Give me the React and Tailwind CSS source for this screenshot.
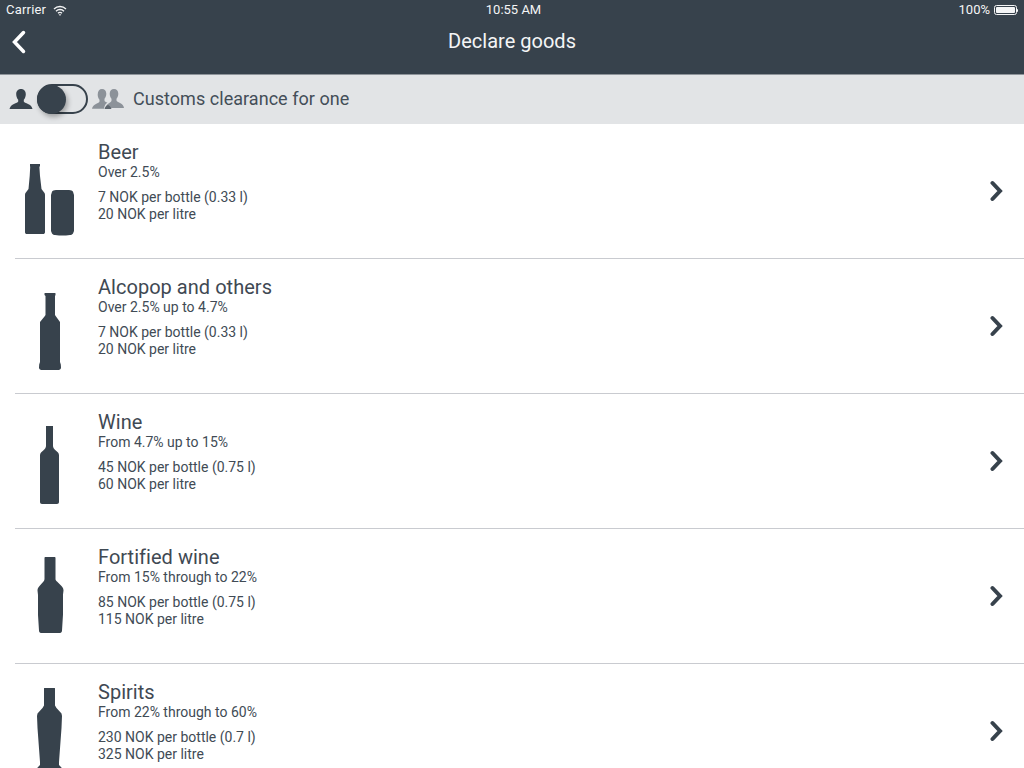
import React from 'react';

const Beer = () => (
  <svg width="60" height="90" viewBox="0 0 60 90" className="shrink-0 fill-[#37424c]">
    <path d="M10 18h10v2l-.6 1 .6 9 1.500 13 3 4c.3.5.5 1 .5 2v37c0 1.500-.8 2-2 2H7c-1.300 0-2-.5-2-2V49c0-1 .2-1.500.5-2l3-4L9.700 30l.5-9-.2-1z" />
    <path d="M36 44h13c2 0 3.500.7 4 1.800l1 3.200v36l-1 2.500c-.5.8-1.500 1.500-3 1.500l-4 .5h-7l-4-.5c-1.500 0-2.500-.7-3-1.500L31 85V49l1-3.200c.5-1.100 2-1.800 4-1.800z" />
  </svg>
);

const Alcopop = () => (
  <svg width="60" height="90" viewBox="0 0 60 90" className="shrink-0 fill-[#37424c]">
    <path d="M24.500 12.500c0-.4.300-.5 1-.5h9c.7 0 1 .1 1 .5V14l-.5 1v19l1 1.500L40 41v40l.8 2.500.2 3c0 1.500-1 2.500-2.500 2.500h-17c-1.500 0-2.500-1-2.500-2.500l.2-3L20 81V41l4.500-5.500 1-1.500V15l-1-1z" />
  </svg>
);

const Wine = () => (
  <svg width="60" height="90" viewBox="0 0 60 90" className="shrink-0 fill-[#37424c]">
    <path d="M26 10h7v20c0 1.500 1 3 2.500 4.200 2 1.500 3.500 3 3.500 5V86c0 1.200-.8 2-2 2H22c-1.200 0-2-.8-2-2V39.200c0-2 1.500-3.500 3.500-5C25 33 26 31.500 26 30z" />
  </svg>
);

const Fortified = () => (
  <svg width="60" height="90" viewBox="0 0 60 90" className="shrink-0 fill-[#37424c]">
    <path d="M24.500 7c0-.6.400-1 1-1h9c.6 0 1 .4 1 1v21c0 1 .5 1.800 1.500 2.500l4.500 4.500c1.500 1.500 2 3 2 4.500l-.5 4v20l-1 16c0 1.500-.8 2.500-2 2.500H21c-1.200 0-2-1-2-2.500L18 64V44l-.5-4.500c0-1.500.5-3 2-4.500l4-4.500c.7-.7 1-1.500 1-2.500z" />
  </svg>
);

const Spirits = () => (
  <svg width="60" height="90" viewBox="0 0 60 90" className="shrink-0 fill-[#37424c]">
    <path d="M24 2.500c0-.4.300-.5 1-.5h9c.7 0 1 .1 1 .5V19.500l1.500 2.500 5 5.500.5 2.500-.5 12-2.500 34v3l2.500 2.500v4H17.500v-4l2.500-2.500v-3L17.500 42 17 30l.5-2.500 5-5.500 1.500-2.500z" />
  </svg>
);

const items = [
  { name: 'Beer', limit: 'Over 2.5%', bottle: '7 NOK per bottle (0.33 l)', litre: '20 NOK per litre', Icon: Beer },
  { name: 'Alcopop and others', limit: 'Over 2.5% up to 4.7%', bottle: '7 NOK per bottle (0.33 l)', litre: '20 NOK per litre', Icon: Alcopop },
  { name: 'Wine', limit: 'From 4.7% up to 15%', bottle: '45 NOK per bottle (0.75 l)', litre: '60 NOK per litre', Icon: Wine },
  { name: 'Fortified wine', limit: 'From 15% through to 22%', bottle: '85 NOK per bottle (0.75 l)', litre: '115 NOK per litre', Icon: Fortified },
  { name: 'Spirits', limit: 'From 22% through to 60%', bottle: '230 NOK per bottle (0.7 l)', litre: '325 NOK per litre', Icon: Spirits },
];

const StatusBar = () => (
  <div className="flex h-5 items-center justify-between pl-[6px] pr-[6px] text-[13px] leading-5 text-[#f4f5f6]">
    <div className="flex w-[200px] items-center gap-[7px]">
      <span className="tracking-[0.2px]">Carrier</span>
      <svg width="14" height="11" viewBox="0 0 14 11" fill="none" stroke="currentColor" strokeWidth="1.300">
        <path d="M1 4a8.500 8.500 0 0 1 12 0" />
        <path d="M3 6.200a5.600 5.600 0 0 1 8 0" />
        <path d="M5 8.300a2.800 2.800 0 0 1 4 0" />
        <path d="M6.200 9.700a1.100 1.100 0 0 1 1.600 0L7 10.500z" fill="currentColor" strokeWidth="0.500" />
      </svg>
    </div>
    <span className="ml-[3px]">10:55 AM</span>
    <div className="flex w-[200px] items-center justify-end gap-[4px]">
      <span>100%</span>
      <div className="flex items-center">
        <div className="h-[10px] w-[23px] rounded-[2.500px] border border-[#f4f5f6] p-px">
          <div className="h-full w-full rounded-[1px] bg-[#f4f5f6]" />
        </div>
        <div className="h-[3px] w-px rounded-r-sm bg-[#f4f5f6]" />
      </div>
    </div>
  </div>
);

const Person = () => (
  <svg width="24" height="22" viewBox="0 0 24 22" className="shrink-0">
    <path fill="#37424c" d="M12 1c3 0 4.800 2.200 4.800 5.200 0 2.200-.8 4.200-2 5.500v1.800c0 1 3.200 1.800 5.700 3.300 1.500.9 2.500 2.500 3 4.200H.5c.5-1.700 1.500-3.300 3-4.200 2.500-1.500 5.700-2.300 5.700-3.300v-1.800c-1.200-1.300-2-3.300-2-5.500C7.200 3.200 9 1 12 1z" />
  </svg>
);

const Group = () => (
  <svg width="32" height="22" viewBox="0 0 32 22" className="shrink-0">
    <path fill="#8c9299" d="M10 1c2.600 0 4.300 2 4.300 4.800 0 2-.7 3.800-1.800 5v1.700c0 .9 1.500 1.500 3 2.300-1.800.8-3 2.700-3.500 6H0c.4-1.700 1.300-3.200 2.700-4 2.200-1.400 4.800-2.100 4.800-3.300v-1.700c-1.100-1.200-1.800-3-1.800-5C5.700 3 7.400 1 10 1z" />
    <path fill="#8c9299" d="M22 1c2.600 0 4.300 2 4.300 4.800 0 2-.7 3.800-1.800 5v1.700c0 1.200 2.600 1.900 4.800 3.300 1.400.8 2.300 2.300 2.700 4.200H13.500c.4-1.900 1.300-3.400 2.700-4.200 2.200-1.400 3.300-2.100 3.300-3.300v-1.700c-1.100-1.200-1.800-3-1.800-5C17.700 3 19.400 1 22 1z" />
    <path fill="#5e666e" d="M16 17c1.200.5 2.700 1.500 3.500 4h-7c.6-2.500 2.200-3.500 3.500-4z" />
  </svg>
);

const Row = ({ item }) => {
  const { Icon } = item;
  return (
    <div className="ml-[15px] flex h-[135px] shrink-0 items-center border-b border-[#c9cbd0] pl-[5px] pr-[20px]">
      <Icon />
      <div className="ml-[18px] flex-1 pb-[20px] text-[14px] leading-[17px] text-[#414b55]">
        <div className="text-[20px] leading-[24px] tracking-[0.03px] text-[#3f4953]">{item.name}</div>
        <div className="mb-2">{item.limit}</div>
        <div>{item.bottle}</div>
        <div>{item.litre}</div>
      </div>
      <svg width="14" height="22" viewBox="0 0 14 22" fill="none" stroke="#37424c" strokeWidth="4" strokeLinecap="round" strokeLinejoin="miter">
        <path d="M2.500 3L10 11L2.500 19" />
      </svg>
    </div>
  );
};

export default function App() {
  return (
    <div className="flex h-[768px] w-[1024px] flex-col overflow-hidden bg-white font-['Roboto',sans-serif]">
      <header className="h-[75px] shrink-0 border-b border-[#8e949a] bg-[#37424c]">
        <StatusBar />
        <div className="relative flex h-[42px] items-center justify-center">
          <svg width="18" height="26" viewBox="0 0 18 26" fill="none" stroke="#fff" strokeWidth="3.500" strokeLinecap="round" className="absolute left-[10px] top-[9px]">
            <path d="M13.500 3.500L4.500 13L13.500 22.500" />
          </svg>
          <h1 className="text-[20px] tracking-[0.02px] text-[#f4f5f6]">Declare goods</h1>
        </div>
      </header>
      <div className="flex h-[49px] shrink-0 items-center bg-[#e2e4e6] pb-px pl-[9px]">
        <Person />
        <div className="ml-[4px] flex h-[30px] w-[51px] shrink-0 items-center rounded-full border-2 border-[#37424c]">
          <div className="-ml-[2px] h-[29px] w-[29px] rounded-full bg-[#37424c] shadow-[2px_3px_5px_rgba(0,0,0,0.3)]" />
        </div>
        <div className="ml-[4px]"><Group /></div>
        <span className="mb-[2px] ml-[9px] text-[18px] tracking-[0.04px] text-[#444e58]">Customs clearance for one</span>
      </div>
      {items.map((item) => (
        <Row key={item.name} item={item} />
      ))}
    </div>
  );
}
